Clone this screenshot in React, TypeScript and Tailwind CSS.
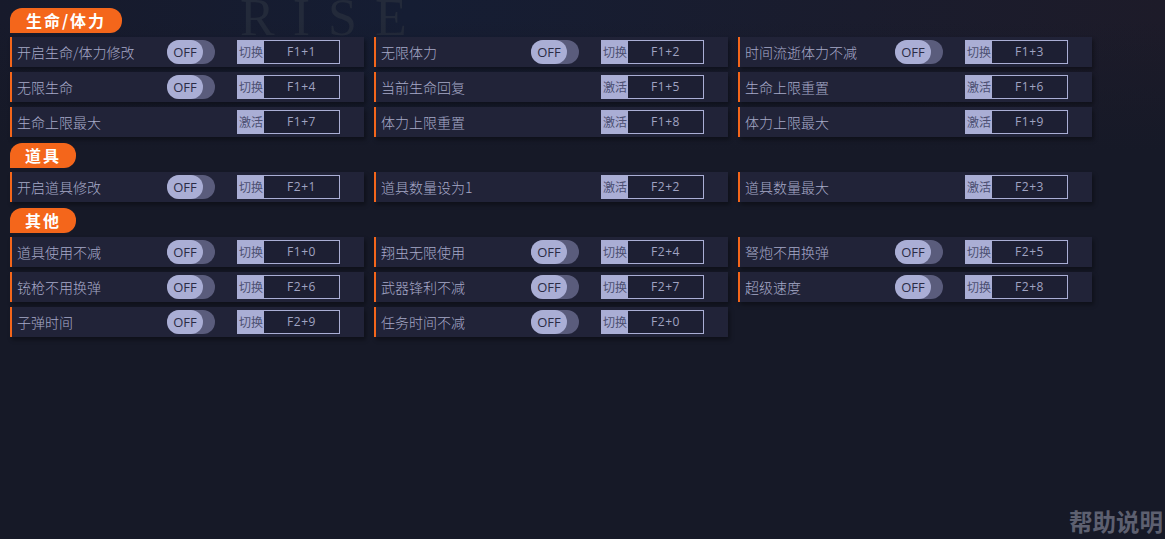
const sections = [
  { title: "生命/体力", w: "w-[112px]", rows: [
    ["开启生命/体力修改", "切换", "F1+1", 1], ["无限体力", "切换", "F1+2", 1], ["时间流逝体力不减", "切换", "F1+3", 1],
    ["无限生命", "切换", "F1+4", 1], ["当前生命回复", "激活", "F1+5", 0], ["生命上限重置", "激活", "F1+6", 0],
    ["生命上限最大", "激活", "F1+7", 0], ["体力上限重置", "激活", "F1+8", 0], ["体力上限最大", "激活", "F1+9", 0],
  ] },
  { title: "道具", w: "w-[66px]", rows: [
    ["开启道具修改", "切换", "F2+1", 1], ["道具数量设为1", "激活", "F2+2", 0], ["道具数量最大", "激活", "F2+3", 0],
  ] },
  { title: "其他", w: "w-[66px]", rows: [
    ["道具使用不减", "切换", "F1+0", 1], ["翔虫无限使用", "切换", "F2+4", 1], ["弩炮不用换弹", "切换", "F2+5", 1],
    ["铳枪不用换弹", "切换", "F2+6", 1], ["武器锋利不减", "切换", "F2+7", 1], ["超级速度", "切换", "F2+8", 1],
    ["子弹时间", "切换", "F2+9", 1], ["任务时间不减", "切换", "F2+0", 1],
  ] },
] as const;

function Row({ name, mode, keyName, toggle }: { name: string; mode: string; keyName: string; toggle: boolean }) {
  return (
    <div className="flex h-[30px] w-[354px] items-center border-l-2 border-[#f4661b] bg-[#212338] pl-[5px] shadow-[2px_3px_4px_rgba(0,0,0,0.35)]">
      <span className="w-[150px] text-[14px] leading-none font-light whitespace-nowrap text-[#a6a9c8]">{name}</span>
      <div className="w-[70px]">
        {toggle && (
          <div className="flex h-6 w-12 rounded-full bg-[#5a5c7c]">
            <div className="flex h-6 w-9 items-center justify-center rounded-full bg-[#aaaed5] pt-[1px] font-['Open_Sans',sans-serif] text-[13px] text-[#2a2c45]">OFF</div>
          </div>
        )}
      </div>
      <div className="flex h-6 w-[103px] border border-[#aaaed5]">
        <div className="flex w-[26px] shrink-0 items-center justify-center bg-[#aaaed5] text-[12px] whitespace-nowrap text-[#4c5072]">{mode}</div>
        <div className="flex flex-1 items-center justify-center bg-[#1d1f33] pb-[1px] font-['Open_Sans',sans-serif] text-[12px] tracking-[0.5px] text-[#a0a3c2]">{keyName}</div>
      </div>
    </div>
  );
}

export default function App() {
  return (
    <div className="relative h-[539px] w-[1165px] overflow-hidden bg-[#161927] font-['Noto_Sans_CJK_SC','Noto_Sans',sans-serif]">
      <div className="absolute inset-x-0 top-0 h-[150px] bg-gradient-to-r from-[#171a2b] via-[#151d33] via-35% to-[#1d1b29]" />
      <div className="absolute left-[240px] top-0 font-['Liberation_Serif',serif] text-[52px] leading-[36px] tracking-[18px] text-[#232a3a]">RISE</div>
      <div className="absolute inset-x-0 top-[20px] h-[130px] bg-gradient-to-b from-transparent to-[#161927]" />
      <div className="relative flex flex-col pl-[10px] pt-2">
        {sections.map((s, i) => (
          <div key={s.title} className={i === 0 ? "" : "mt-[6px]"}>
            <div className={`flex h-[25px] items-center justify-center rounded-tl-[12px] rounded-tr-[12px] rounded-br-[12px] bg-[#f4661b] pb-[2px] text-[16px] font-bold tracking-[2px] text-white ${s.w}`}>
              {s.title}
            </div>
            <div className="mt-1 grid w-[1082px] grid-cols-[354px_354px_354px] gap-x-[10px] gap-y-[5px]">
              {s.rows.map((r) => (
                <Row key={r[0]} name={r[0]} mode={r[1]} keyName={r[2]} toggle={r[3] === 1} />
              ))}
            </div>
          </div>
        ))}
      </div>
      <div className="absolute bottom-[2px] right-[2px] text-[23.5px] leading-[32px] font-bold text-[#5d6070]">帮助说明</div>
    </div>
  );
}
